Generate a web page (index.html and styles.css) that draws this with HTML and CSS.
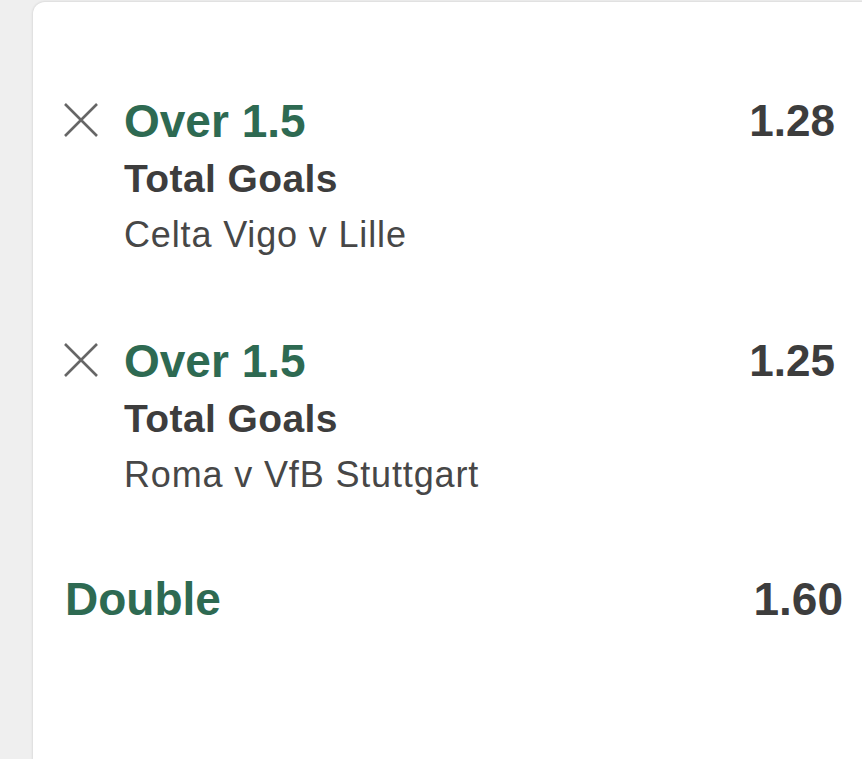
FILE: index.html
```html
<!DOCTYPE html>
<html>
<head>
<meta charset="utf-8">
<link rel="stylesheet" href="styles.css">
</head>
<body>
<div class="card">
  <div class="sel">
    <svg class="x" viewBox="0 0 34 34" width="34" height="34"><path d="M1 1 L33 33 M33 1 L1 33" stroke="#666" stroke-width="2.6" fill="none"/></svg>
    <div class="info">
      <div class="market">Over 1.5</div>
      <div class="type">Total Goals</div>
      <div class="event">Celta Vigo v Lille</div>
    </div>
    <div class="odds">1.28</div>
  </div>
  <div class="sel">
    <svg class="x" viewBox="0 0 34 34" width="34" height="34"><path d="M1 1 L33 33 M33 1 L1 33" stroke="#666" stroke-width="2.6" fill="none"/></svg>
    <div class="info">
      <div class="market">Over 1.5</div>
      <div class="type">Total Goals</div>
      <div class="event">Roma v VfB Stuttgart</div>
    </div>
    <div class="odds">1.25</div>
  </div>
  <div class="total">
    <div class="total-name">Double</div>
    <div class="total-odds">1.60</div>
  </div>
</div>
</body>
</html>
```
FILE: styles.css
```css
html, body {
  margin: 0;
  padding: 0;
}
body {
  background: #efefef;
  height: 759px;
  overflow: hidden;
  font-family: "Liberation Sans", Arial, sans-serif;
}
.card {
  margin: 2px 0 0 33px;
  background: #ffffff;
  border-radius: 12px 0 0 0;
  box-shadow: 0 0 2px 1px rgba(0, 0, 0, 0.08);
  height: 757px;
  box-sizing: border-box;
  padding-top: 90px;
  display: flex;
  flex-direction: column;
  gap: 70px;
}
.sel {
  display: grid;
  grid-template-columns: 60px 1fr auto;
  padding: 0 27px 0 31px;
}
.x {
  margin-top: 11px;
  display: block;
}
.market {
  font-size: 46px;
  line-height: 58px;
  font-weight: 700;
  color: #2e6a52;
}
.type {
  font-size: 39px;
  line-height: 58px;
  font-weight: 700;
  letter-spacing: 0.4px;
  color: #3d3d3d;
}
.event {
  font-size: 36px;
  line-height: 54px;
  letter-spacing: 0.85px;
  color: #474747;
}
.odds {
  font-size: 44px;
  line-height: 58px;
  font-weight: 700;
  color: #3d3d3d;
}
.total {
  display: flex;
  justify-content: space-between;
  padding: 0 19px 0 32px;
  margin-top: -2px;
}
.total-name {
  font-size: 46px;
  line-height: 58px;
  font-weight: 700;
  color: #2e6a52;
}
.total-odds {
  font-size: 46px;
  line-height: 58px;
  font-weight: 700;
  color: #3d3d3d;
}
```
